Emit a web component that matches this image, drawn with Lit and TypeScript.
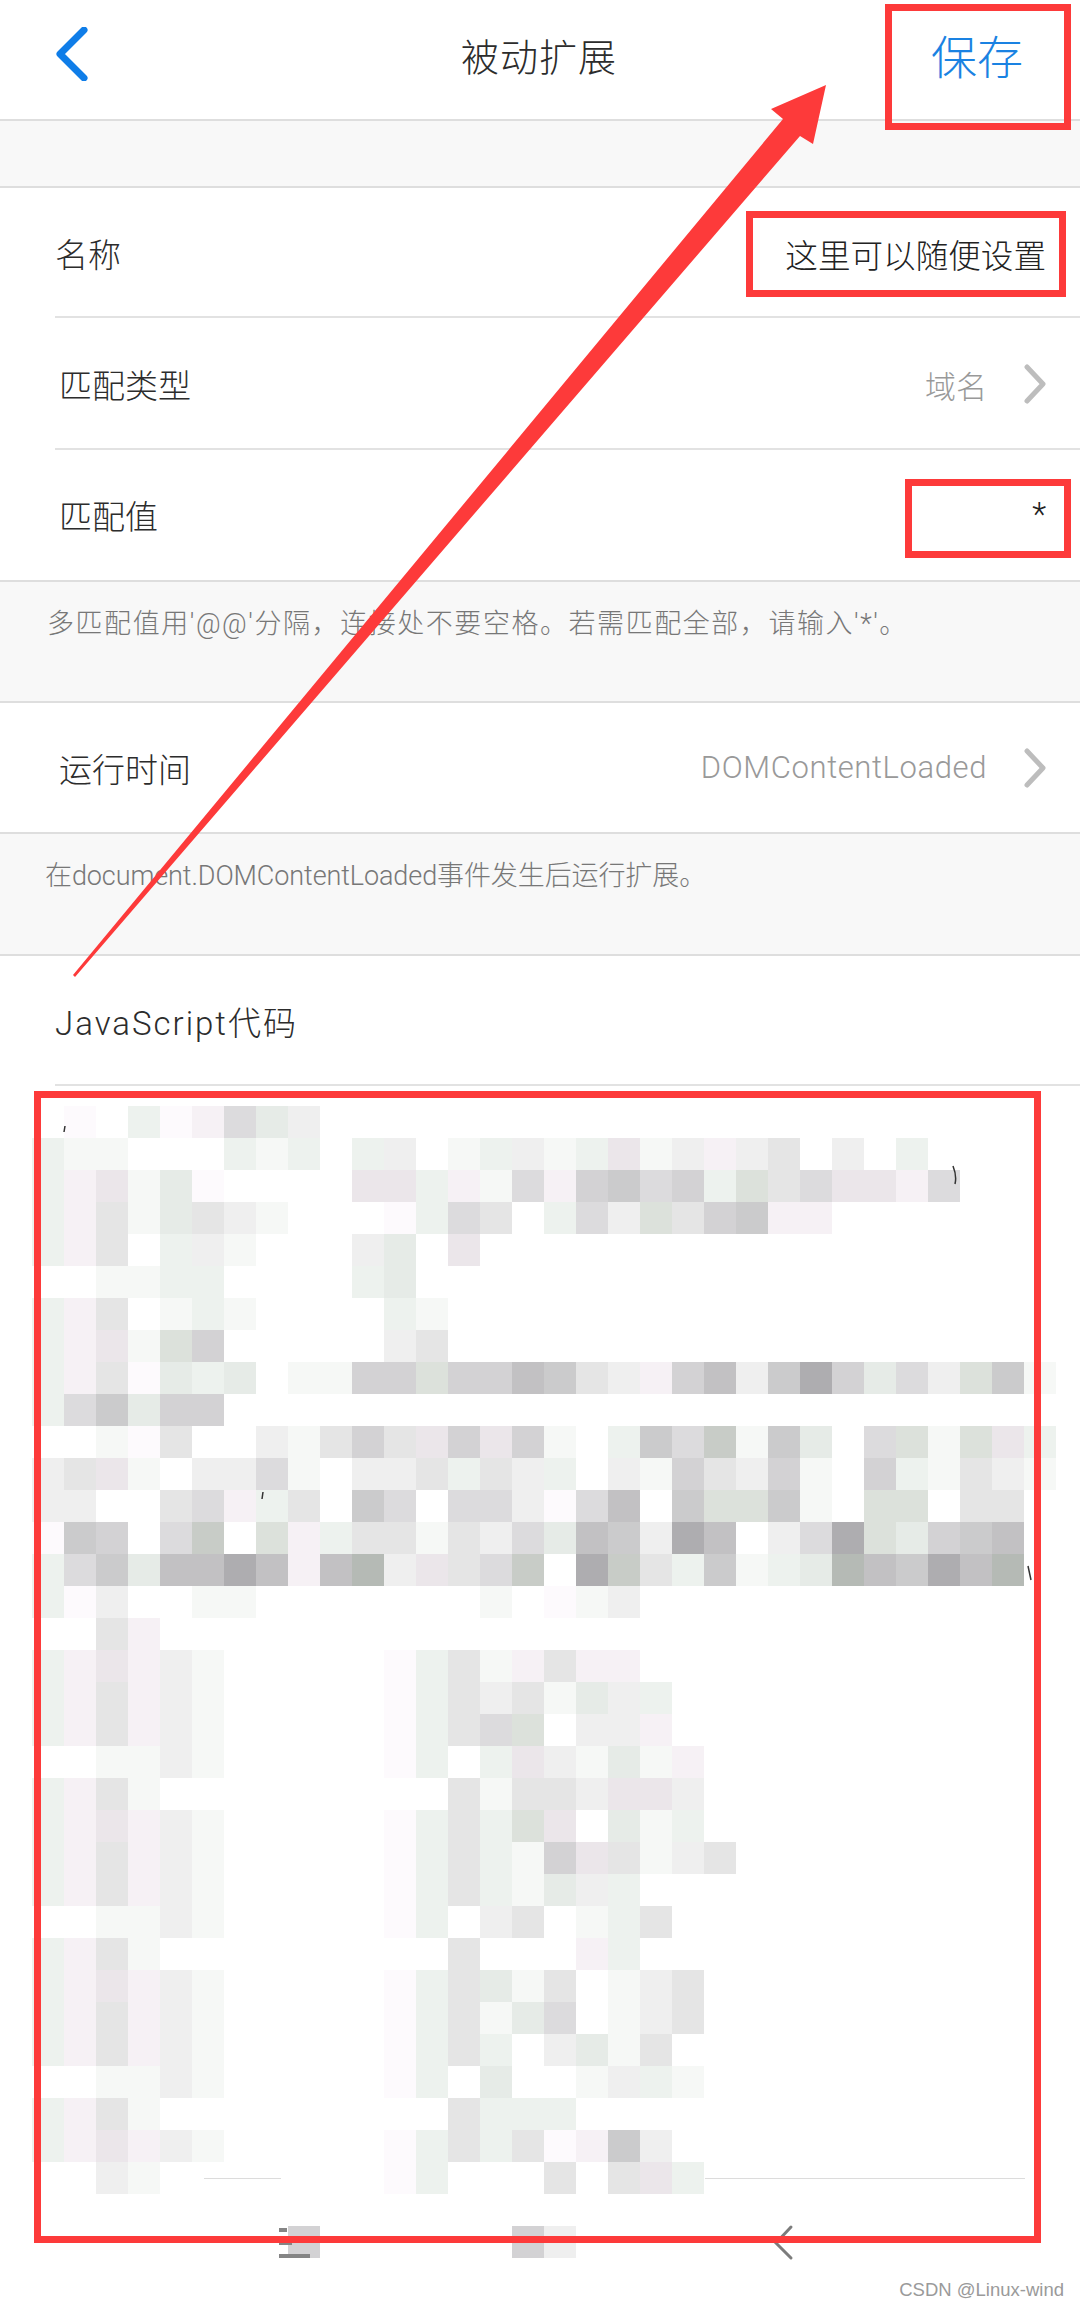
import { LitElement, html, css, svg } from "lit";
import { customElement } from "lit/decorators.js";

const PALETTE: Record<string, string> = {
  a: "#fdfafd", b: "#f6f8f6", c: "#f6f1f5", d: "#edf2ee", e: "#efefef", f: "#e6ebe7",
  g: "#ebe6ea", h: "#e5e5e5", i: "#dcdbdd", j: "#d3d2d4", k: "#dce1db", l: "#cbcbcc",
  m: "#c2c1c3", n: "#aeadb0", o: "#c8ccc7", p: "#b5bab5",
};

const MOSAIC = [
  ".a.dacife",
  "dbb...dbd.de.bdebdgbeceh.e.d",
  "dcgbfa....ggdcbicjlijdkhiggci",
  "dchbfheb...adih.diekhjlcc",
  "dch.deb...ef.g",
  "..bbdd....df",
  "dch.bdb....db",
  "dcgbkj.....eh",
  "dchafdf.bbjjkjjmlhecjmelnjfieklb",
  "dilfjj",
  "..bah..ebhjhgjgjb.dlioblf.ikbkgd",
  "ehgb.eeib.eehdhed.ebjhejb.jdbheb",
  "ee..hicdh.li.iieaim.lkklb.kk.hh",
  "alj.io.kcdhhbheifmlenm.einkfjlm",
  "dilfmmnmcmpeghio.nohdlbdfpmlnmp",
  "dae..bb.......b.abe",
  "..hc",
  "dcgceb.....adhbchcc",
  "dchceb.....adhehbfed",
  "dchceb.....adhik.eec",
  "..bbeb.....ad.dgebfbc",
  "dchb.........hbhhegge",
  "dcgceb.....adhdkg.fbd",
  "dchceb.....adhdbjghbeh",
  "dchceb.....adhdbfed",
  "..bbeb.....ad.eh.bdh",
  "dchb.........h...cd",
  "dcgceb.....adhfbh.beh",
  "dchceb.....adhbfi.beh",
  "dchceb.....adhd.efbh",
  "..bbeb.....ad.f..bedb",
  "dchb.........hddd",
  "dcgceb.....adhdhacle",
  "..eb.......ad...h.hgd",
  "",
  "........j......je",
];

const CELL = 32;
const CODE_TOP = 1086;
const MOSAIC_TOP = 1106;

const REDS = [
  [885, 4, 186, 126],
  [746, 211, 320, 86],
  [905, 479, 166, 79],
  [34, 1091, 1007, 1152],
];

@customElement("app-root")
export class AppRoot extends LitElement {
  static styles = css`
    :host {
      display: block;
      position: relative;
      width: 1080px;
      height: 2308px;
      overflow: hidden;
      background: #fff;
      color: #2c2c2c;
      font-family: "Roboto", "Noto Sans CJK SC", sans-serif;
      font-weight: 300;
    }
    .nav {
      height: 108px;
      padding: 0 57px 11px 55px;
      display: grid;
      grid-template-columns: 1fr auto 1fr;
      align-items: center;
      border-bottom: 2px solid #dedede;
    }
    .back { display: block; width: 34px; height: 54px; }
    .title { font-size: 38px; letter-spacing: 1px; }
    .save { justify-self: end; font-size: 46px; color: #1a82e2; }
    .band {
      background: #f8f8f8;
      border-bottom: 2px solid #dedede;
    }
    .spacer { height: 65px; }
    .hint {
      height: 121px;
      padding: 24px 0 0 47px;
      box-sizing: border-box;
      font-size: 27px;
      line-height: 36px;
      letter-spacing: 1.55px;
      color: #777;
      white-space: nowrap;
    }
    .hint.tight { height: 122px; padding-left: 45px; letter-spacing: -0.1px; }
    .row {
      height: 130px;
      display: flex;
      align-items: center;
      justify-content: space-between;
      padding: 0 34px 0 55px;
      font-size: 33px;
      position: relative;
    }
    .row.tall { height: 132px; }
    .row.short { height: 129px; }
    .row.line::after {
      content: "";
      position: absolute;
      left: 55px;
      right: 0;
      bottom: 0;
      height: 2px;
      background: #e2e2e2;
    }
    .row.end { border-bottom: 2px solid #dedede; }
    .indent { margin-left: 4px; }
    .js { letter-spacing: 2px; }
    .value { display: flex; align-items: center; gap: 37px; color: #999; font-size: 31px; }
    .value.dark { color: #222; font-size: 32.6px; }
    .value.latin { letter-spacing: 0.6px; }
    .chev { display: block; width: 22px; height: 40px; }
    .code { height: 1222px; }
    .code svg { display: block; }
    .overlay { position: absolute; left: 0; top: 0; pointer-events: none; }
    .mark {
      position: absolute;
      right: 16px;
      bottom: 7px;
      font-family: "Liberation Sans", sans-serif;
      font-weight: 400;
      font-size: 18.5px;
      line-height: 22px;
      color: #9a9a9a;
    }
  `;

  private chev() {
    return html`<svg class="chev" viewBox="0 0 22 40"><path d="M3 3 L19 20 L3 37" fill="none" stroke="#bdbdbd" stroke-width="5" stroke-linecap="round" stroke-linejoin="round"/></svg>`;
  }

  private mosaic() {
    const rects = [];
    MOSAIC.forEach((row, r) => {
      [...row].forEach((ch, c) => {
        if (ch === ".") return;
        rects.push(svg`<rect x=${(c + 1) * CELL} y=${MOSAIC_TOP - CODE_TOP + r * CELL} width=${CELL} height=${CELL} fill=${PALETTE[ch]} />`);
      });
    });
    return rects;
  }

  render() {
    return html`
      <header class="nav">
        <svg class="back" viewBox="0 0 34 54"><path d="M29 3 L5 27 L29 51" fill="none" stroke="#0f7de8" stroke-width="7" stroke-linecap="round" stroke-linejoin="round"/></svg>
        <div class="title">被动扩展</div>
        <div class="save">保存</div>
      </header>
      <div class="band spacer"></div>
      <div class="row line"><span>名称</span><span class="value dark">这里可以随便设置</span></div>
      <div class="row line tall"><span class="indent">匹配类型</span><span class="value">域名${this.chev()}</span></div>
      <div class="row end"><span class="indent">匹配值</span><span class="value dark">*</span></div>
      <div class="band hint">多匹配值用'@@'分隔，连接处不要空格。若需匹配全部，请输入'*'。</div>
      <div class="row end short"><span class="indent">运行时间</span><span class="value latin">DOMContentLoaded${this.chev()}</span></div>
      <div class="band hint tight">在document.DOMContentLoaded事件发生后运行扩展。</div>
      <div class="row line"><span class="js">JavaScript代码</span></div>
      <div class="code">
        <svg width="1080" height="1222" viewBox="0 0 1080 1222">
          ${this.mosaic()}
          <path d="M204 1092.5 H281 M705 1092.5 H1025" stroke="#dcdcdc" stroke-width="1" fill="none"/>
          <path d="M279 1144 H287 M279 1157 H292 M279 1170 H310" stroke="#858585" stroke-width="4" fill="none"/>
          <path d="M791 1141 L776 1157 L791 1172" stroke="#7c7c7c" stroke-width="3" fill="none" stroke-linecap="round"/>
          <path d="M65 40 L64 46 M953 80 Q957 90 955 98 M263 406 L262 413 M1028 480 L1031 494" stroke="#333" stroke-width="1.5" fill="none"/>
        </svg>
      </div>
      <svg class="overlay" width="1080" height="2308" viewBox="0 0 1080 2308">
        ${REDS.map(([x, y, w, h]) => svg`<rect x=${x + 3.5} y=${y + 3.5} width=${w - 7} height=${h - 7} fill="none" stroke="#fd3a3a" stroke-width="7"/>`)}
        <polygon points="826,85 771,109 783,119 73,975 75,977 800,136 813,144" fill="#fd3a3a"/>
      </svg>
      <div class="mark">CSDN @Linux-wind</div>
    `;
  }
}
